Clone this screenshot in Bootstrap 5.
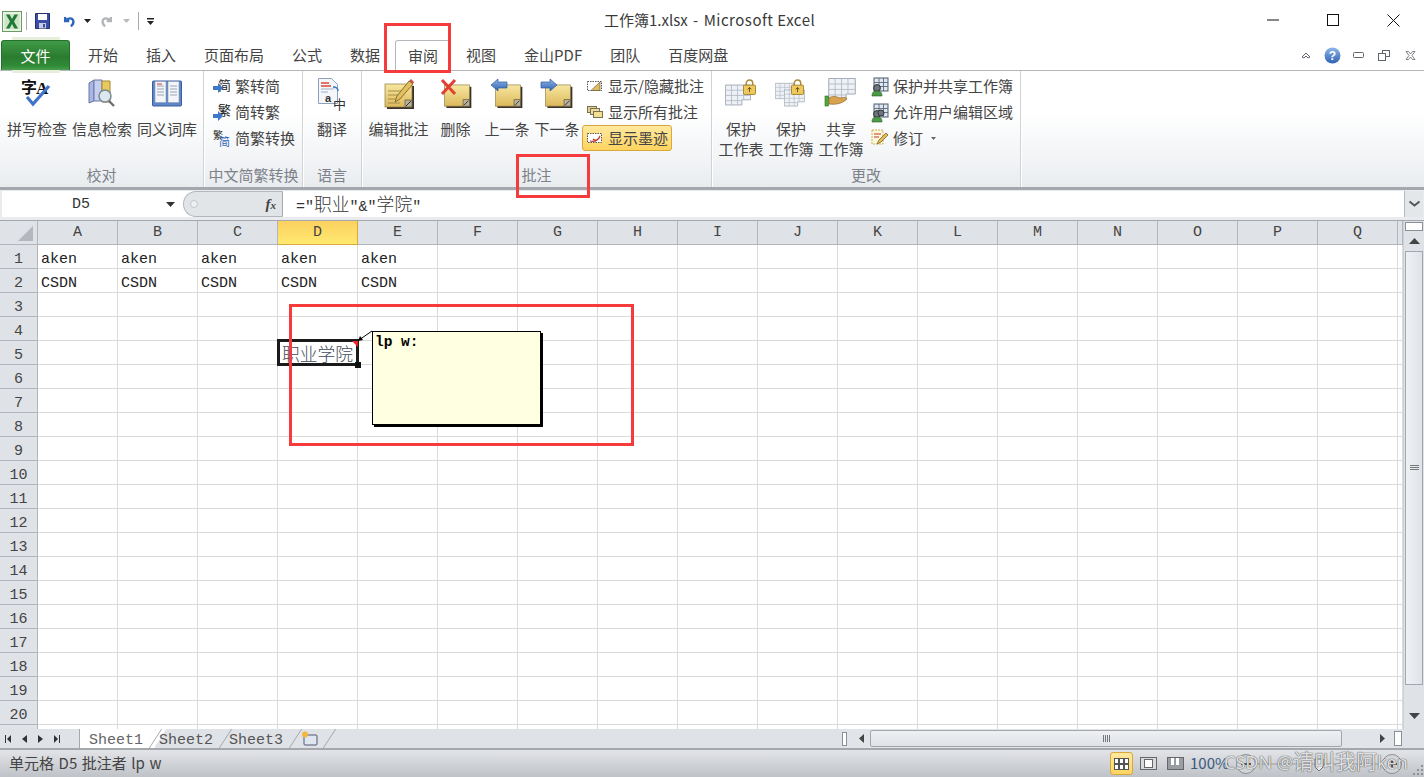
<!DOCTYPE html>
<html lang="zh-CN">
<head>
<meta charset="UTF-8"/>
<title>工作簿1.xlsx - Microsoft Excel</title>
<link href="https://cdn.jsdelivr.net/npm/bootstrap@5.3.0/dist/css/bootstrap.min.css" rel="stylesheet"/>
<style>
  html, body { margin: 0; width: 1424px; height: 777px; overflow: hidden; background: #fff; }
  body, .xl-app { font-family: "Noto Sans CJK SC", "Noto Sans", sans-serif; font-size: 15px; color: #444; }
  .xl-app { position: relative; width: 1424px; height: 777px; }
  svg { display: block; flex: none; overflow: visible; }
  .cjk { font-family: "Noto Sans CJK SC", sans-serif; font-size: 17.8px; font-weight: 300; }

  /* title bar */
  .xl-title { height: 40px; }
  .xl-qat { width: 160px; padding-left: 2px; padding-top: 2px; }
  .xl-qat .qsep { width: 1px; height: 18px; background: #a8acb2; }
  .xl-caption { left: 604px; top: 10px; color: #3a3a3a; font-size: 15px; line-height: 20px; white-space: pre; word-spacing: 2px; }
  .xl-caption span { letter-spacing: .5px; word-spacing: 0; }
  .xl-win { margin-left: auto; }
  .xl-win span { width: 60px; height: 30px; display: flex; align-items: center; justify-content: center; }

  /* tabs */
  .xl-tabs { height: 31px; border-bottom: 1px solid #b4b7bb; padding-left: 1px; }
  .xl-file { width: 69px; height: 30px; margin-right: 4px; text-align: center; line-height: 30px; color: #fff; position: relative;
    background: linear-gradient(#3f9a47, #2a7c2f 55%, #2f8a36 85%, #4a9f4e); border: 1px solid #27702c; border-bottom: 0; border-radius: 3px 3px 0 0; z-index: 1; }
  .xl-file::before, .xl-file::after { content: ""; position: absolute; left: 10px; right: 9px; height: 3px; background: #e6efdc; }
  .xl-file::before { top: -4px; }
  .xl-file::after { bottom: -3px; }
  .xl-tab { padding: 0 14px; height: 30px; line-height: 30px; color: #444; white-space: nowrap; }
  .xl-tab.on { height: 31px; padding: 0 12px; margin: 0 1px -1px; background: #fff; border: 1px solid #b4b7bb; border-bottom: 0; border-radius: 3px 3px 0 0; z-index: 1; }
  .xl-ctl { margin-left: auto; padding-right: 1px; height: 30px; }
  .xl-ctl span { width: 26px; display: flex; justify-content: center; }

  /* ribbon */
  .xl-ribbon { height: 116px; background: linear-gradient(#fff 35%, #f2f4f6 75%, #e9ecef); }
  .rb-group { border-right: 1px solid #cfd2d6; box-shadow: 1px 0 0 #fff; height: 116px; }
  .rb-body { height: 93px; flex: none; }
  .rb-name { height: 23px; line-height: 22px; text-align: center; color: #7d828a; font-size: 15px; white-space: nowrap; }
  .rb-big { display: flex; flex-direction: column; align-items: center; flex: none; line-height: 20px; white-space: nowrap; text-align: center; color: #444; }
  .rb-ico { height: 48px; display: flex; align-items: center; justify-content: center; padding-bottom: 4px; }
  .rb-small { display: flex; flex-direction: column; padding-top: 2px; }
  .rb-item { height: 26px; line-height: 26px; display: flex; align-items: center; white-space: nowrap; color: #444; }
  .rb-item.on { background: linear-gradient(#ffe9a0, #ffd45f); border: 1px solid #d8a83c; border-radius: 3px; }

  /* formula bar */
  .xl-fbar { height: 34px; border-top: 3px solid #a4a8ad; border-bottom: 1px solid #a4a8ad; background: #e9ebee; }
  .fb-row { height: 26px; margin: 1px 1px 0 2px; background: #fff; }
  .fb-name { width: 181px; padding-left: 70px; font-family: "Liberation Mono", monospace; color: #333; line-height: 28px; }
  .fb-pill { width: 100px; height: 26px; background: #e2e5e8; border: 1px solid #b4b8bd; border-right: 1px solid #a4a8ad; border-radius: 13px 0 0 13px; }
  .fb-fx { font-family: "Liberation Serif", serif; font-style: italic; font-weight: 700; font-size: 15px; color: #444; right: 6px; top: 1px; }
  .fb-text { padding-left: 13px; line-height: 25px; color: #333; flex: 1; font-family: "Liberation Mono", monospace; font-size: 15px; }
  .fb-drop { width: 19px; height: 26px; background: #e4e7ea; border-left: 1px solid #b4b8bd; }

  /* sheet */
  .xl-mid { height: 508px; }
  .xl-sheet { width: 1403px; height: 508px; overflow: hidden; display: grid; grid-template-columns: 38px repeat(17, 80px) 5px; grid-auto-rows: 24px;
    font-family: "Liberation Mono", "Noto Sans CJK SC", monospace; font-size: 15px; color: #222; }
  .sc { border-right: 1px solid #dadada; border-bottom: 1px solid #dadada; padding-left: 3px; line-height: 29px; white-space: nowrap; }
  .sh { background: #dfe2e7; border-right: 1px solid #b2b6bc; border-bottom: 1px solid #b2b6bc; text-align: center; line-height: 23px; color: #444; padding: 0; }
  .sh.rw { line-height: 29px; }
  .sh.hot { background: linear-gradient(#fbd15f, #ffe970); border-color: #dca83c; }
  .sel { position: relative; z-index: 2; overflow: visible; color: #3c4a58; padding-left: 4px; line-height: 25px; }
  .sel::before { content: ""; position: absolute; left: -1px; top: -2px; width: 82px; height: 27px; border: 3px solid #1b1b1b; }
  .sel::after { content: ""; position: absolute; left: 77px; top: 21px; width: 6px; height: 6px; background: #111; }
  .sel-mark { position: absolute; left: 74px; top: 0; z-index: 1; }
  .xl-comment { position: absolute; left: 372px; top: 110px; width: 169px; height: 94px; background: #ffffe1; border: 1px solid #000; box-shadow: 2px 2px 0 #000;
    font-family: "Liberation Mono", monospace; font-weight: 700; font-size: 14.5px; line-height: 16px; color: #000; padding: 2px; z-index: 3; }
  .xl-leader { position: absolute; left: 350px; top: 105px; z-index: 4; }

  /* vertical scrollbar */
  .xl-vbar { width: 21px; height: 508px; background: #dfe3e8; border-left: 1px solid #cdd1d6; }
  .vb-split { height: 9px; margin: 1px 1px 0; background: #fff; border: 1px solid #8b9097; }
  .vb-thumb { height: 434px; margin: 0 1px; background: linear-gradient(90deg, #eff1f4, #dfe3e8); border: 1px solid #a2a7ae; }
  .vb-arrow { height: 20px; }

  /* sheet tabs and horizontal bar */
  .xl-tabbar { height: 21px; background: #dfe2e7; border-bottom: 2px solid #a4a8ad; font-family: "Liberation Mono", monospace; color: #555; }
  .tb-nav { width: 80px; height: 19px; gap: 0; border-right: 1px solid #a4a8ad; padding-left: 5px; }
  .tb-sheet { width: 70px; height: 19px; line-height: 23px; padding-left: 4px; white-space: nowrap; position: relative; }
  .tb-sheet::after { content: ""; position: absolute; right: -1px; top: 0; width: 1px; height: 19px; background: #a4a8ad; transform: skewX(-33deg); }
  .tb-sheet.on { width: 75px; background: #fff; padding-left: 9px; color: #666; }
  .tb-sheet.on::before { content: ""; position: absolute; right: -5px; top: 0; width: 10px; height: 19px; background: #fff; transform: skewX(-33deg); z-index: 0; }
  .tb-new { width: 40px; padding-left: 6px; height: 19px; position: relative; }
  .tb-new::after { content: ""; position: absolute; right: 5px; top: 0; width: 1px; height: 19px; background: #a4a8ad; transform: skewX(-33deg); }
  .tb-rest { width: 507px; }
  .hb-main { flex: 1; height: 19px; background: #e1e4e9; }
  .hb-thumb { width: 472px; height: 17px; margin-left: 6px; background: linear-gradient(#eef0f3, #dfe2e7); border: 1px solid #a2a7ae; border-radius: 2px; }
  .hb-box { width: 8px; height: 15px; background: #fff; border: 1px solid #8b9097; }

  /* status bar */
  .xl-status { height: 27px; background: linear-gradient(#e2e4e8, #bfc2c7); padding-left: 9px; line-height: 25px; color: #444; font-size: 15px; word-spacing: 1.2px; }
  .st-view { width: 23px; height: 23px; display: flex; align-items: center; justify-content: center; }
  .st-view.on { background: linear-gradient(#ffe9a0, #ffd45f); border: 1px solid #d8a83c; border-radius: 3px; }
  .st-pct { left: 1190px; top: 0; color: #3a5a7c; position: absolute; font-size: 15px; }
  .xl-mark { position: absolute; left: 1224px; top: 748px; font-size: 18px; line-height: 26px; color: rgba(242,243,245,.9); z-index: 6; white-space: nowrap; text-shadow: 0 0 1px #555, 0 0 1px #555; font-family: "Noto Sans", "Noto Sans CJK SC", sans-serif; }
  .xl-mark span { font-size: 21px; }

  /* annotation boxes */
  .xl-red { position: absolute; border: 3px solid #f53b3b; z-index: 5; }
</style>
</head>
<body>
<svg width="0" height="0" class="position-absolute">
  <defs>
    <linearGradient id="gNote" x1="0" y1="0" x2="0" y2="1"><stop offset="0" stop-color="#f7e7a0"/><stop offset="1" stop-color="#dcb95c"/></linearGradient>
    <linearGradient id="gBlue" x1="0" y1="0" x2="0" y2="1"><stop offset="0" stop-color="#8fb6e8"/><stop offset="1" stop-color="#2f62b4"/></linearGradient>
    <symbol id="note" viewBox="0 0 30 26">
      <rect x="3" y="3" width="27" height="23" fill="#3a3228"/>
      <rect x="1" y="1" width="27" height="23" fill="url(#gNote)" stroke="#8d7a45" stroke-width=".7"/>
      <rect x="21" y="17" width="7" height="7" fill="#b9b19a" stroke="#5b5238" stroke-width=".7"/>
      <path d="M22 23l5-5" stroke="#333" stroke-width="1"/>
    </symbol>
    <symbol id="grid" viewBox="0 0 30 24">
      <path d="M.5.5h29v17h-10v6h-19z" fill="#eef1f6" stroke="#9aa3ae"/>
      <path d="M.5 6.5h29M.5 12.5h29M.5 18.5h19M7.5.5v23M14.5.5v23M21.5.5v17" stroke="#b3bcc8" fill="none"/>
    </symbol>
    <symbol id="lock" viewBox="0 0 14 17">
      <path d="M3.5 7V4.5a3.5 3.5 0 0 1 7 0V7" fill="none" stroke="#a98a3a" stroke-width="1.6"/>
      <rect x=".5" y="6.5" width="13" height="10" rx="1" fill="#eec95c" stroke="#a27f2c"/>
      <path d="M7 9v5M5 11l2-2 2 2" stroke="#6a4e14" fill="none"/>
    </symbol>
    <symbol id="people" viewBox="0 0 18 20">
      <rect x="3" y="1" width="14" height="13" fill="#dfe6ef" stroke="#4d5c70"/>
      <path d="M3 5.500h14M3 9.500h14M8 1v13M12.500 1v13" stroke="#4d5c70" stroke-width=".8"/>
      <circle cx="6" cy="11" r="3.400" fill="#6d7680" stroke="#333"/>
      <path d="M1 19c0-4 2-5 5-5s5 1 5 5z" fill="#4a9b45" stroke="#2a5d27" stroke-width=".6"/>
    </symbol>
  </defs>
</svg>

<div class="xl-app d-flex flex-column">

  <!-- title bar -->
  <div class="xl-title d-flex">
    <div class="xl-qat d-flex align-items-center position-relative">
      <svg width="20" height="21" viewBox="0 0 20 21"><rect x=".5" y=".5" width="19" height="20" fill="#e9f2e4" stroke="#6c9b62"/><rect x="2.500" y="3" width="15" height="15" fill="#cfe3c6"/><path d="M4 3.500h3.500L10 8l2.500-4.500H16L12 10.500l4 7h-3.600L10 13l-2.500 4.500H4l4-7z" fill="#1f7a37"/></svg>
      <span class="qsep ms-1"></span>
      <svg class="ms-2" width="15" height="16" viewBox="0 0 15 16"><path d="M.5.5h14v15H.5z" fill="#3c4fa8" stroke="#222f70"/><rect x="3" y="1" width="9" height="6" fill="#fff"/><rect x="4" y="10" width="7" height="5.500" fill="#c9cede"/><rect x="8" y="11" width="2" height="3.500" fill="#3c4fa8"/></svg>
      <svg style="margin-left:11px" width="14" height="14" viewBox="0 0 17 14"><path d="M5 2v5h5M5.500 6.500C9 2.500 14 3 15 7c.5 2.500-1 5-3 6.500" fill="none" stroke="#2c66bd" stroke-width="2.800"/></svg>
      <svg style="margin-left:9px" width="7" height="4" viewBox="0 0 7 4"><path d="M0 0h7L3.500 4z" fill="#222"/></svg>
      <svg style="margin-left:10px" width="14" height="14" viewBox="0 0 17 14"><path d="M12 2v5H7M11.500 6.500C8 2.500 3 3 2 7c-.5 2.500 1 5 3 6.500" fill="none" stroke="#b3b5b8" stroke-width="2.800"/></svg>
      <svg class="ms-2" width="7" height="4" viewBox="0 0 7 4"><path d="M0 0h7L3.500 4z" fill="#b8babd"/></svg>
      <span class="qsep ms-2"></span>
      <svg class="ms-2" width="7" height="7" viewBox="0 0 7 7"><path d="M0 0h7v1.500H0zM0 3h7L3.500 7z" fill="#222"/></svg>
    </div>
    <div class="xl-caption position-absolute">工作簿1.xlsx - <span>Microsoft Excel</span></div>
    <div class="xl-win d-flex align-items-center" style="padding-right:1px">
      <span><svg width="12" height="2" viewBox="0 0 12 2"><path d="M0 1h12" stroke="#111"/></svg></span>
      <span><svg width="12" height="12" viewBox="0 0 12 12"><rect x=".5" y=".5" width="11" height="11" fill="none" stroke="#111"/></svg></span>
      <span><svg width="13" height="13" viewBox="0 0 13 13"><path d="M.5.500l12 12M12.500.500l-12 12" stroke="#111"/></svg></span>
    </div>
  </div>

  <!-- ribbon tabs -->
  <div class="xl-tabs d-flex align-items-start">
    <div class="xl-file">文件</div>
    <div class="xl-tab">开始</div>
    <div class="xl-tab">插入</div>
    <div class="xl-tab">页面布局</div>
    <div class="xl-tab">公式</div>
    <div class="xl-tab">数据</div>
    <div class="xl-tab on">审阅</div>
    <div class="xl-tab">视图</div>
    <div class="xl-tab">金山PDF</div>
    <div class="xl-tab">团队</div>
    <div class="xl-tab">百度网盘</div>
    <div class="xl-ctl d-flex align-items-center">
      <span><svg width="10" height="8" viewBox="0 0 10 8"><path d="M1 6l4-4 4 4-2 1-2-2-2 2z" fill="#fff" stroke="#5f6670"/></svg></span>
      <span><svg width="17" height="17" viewBox="0 0 17 17"><circle cx="8.500" cy="8.500" r="8" fill="url(#gBlue)"/><text x="8.500" y="13" text-anchor="middle" font-family="Liberation Sans" font-weight="700" font-size="12" fill="#fff">?</text></svg></span>
      <span><svg width="11" height="6" viewBox="0 0 11 6"><rect x=".5" y=".5" width="10" height="5" rx="1" fill="#fff" stroke="#5f6670"/></svg></span>
      <span><svg width="12" height="11" viewBox="0 0 12 11"><rect x="4.500" y=".5" width="7" height="6" fill="#fff" stroke="#5f6670"/><rect x=".5" y="3.500" width="7" height="7" fill="#fff" stroke="#5f6670"/></svg></span>
      <span><svg width="11" height="9" viewBox="0 0 11 9"><path d="M1 .5h2.500L5.500 3l2-2.500H10L7 4.500 10 8.500H7.500l-2-2.500-2 2.500H1l3-4z" fill="#fff" stroke="#5f6670" stroke-width=".8"/></svg></span>
    </div>
  </div>

  <!-- ribbon -->
  <div class="xl-ribbon d-flex">

    <div class="rb-group d-flex flex-column" style="width:204px">
      <div class="rb-body d-flex" style="padding-left:7px;gap:5px">
        <div class="rb-big" style="width:60px"><div class="rb-ico">
          <svg width="34" height="32" viewBox="0 0 34 32"><text x="1" y="16" font-family="Noto Sans CJK SC" font-weight="700" font-size="16" fill="#111">字</text><text x="16" y="17" font-family="Liberation Serif" font-weight="700" font-size="17" fill="#111">A</text><path d="M7 20l6 7L29 9" fill="none" stroke="#3f74c8" stroke-width="3.200"/></svg>
        </div>拼写检查</div>
        <div class="rb-big" style="width:60px"><div class="rb-ico">
          <svg width="30" height="32" viewBox="0 0 30 32"><path d="M2 6l5-3v21l-5 2z" fill="#a8b6e2" stroke="#6b78a8"/><path d="M7 3h8v21H7z" fill="#c6cfee" stroke="#6b78a8"/><path d="M15 4h8v21h-8z" fill="#ecc95c" stroke="#a58a35"/><circle cx="18" cy="19" r="6" fill="#dbe8ee" stroke="#7b8a92" stroke-width="1.500"/><path d="M22 24l5 5" stroke="#6a6f75" stroke-width="2.400"/></svg>
        </div>信息检索</div>
        <div class="rb-big" style="width:60px"><div class="rb-ico">
          <svg width="30" height="28" viewBox="0 0 30 28"><rect x=".5" y="2" width="29" height="25" rx="1" fill="#5e85c5" stroke="#3b5e9c"/><path d="M3 2.500h11v21H3zM16 2.500h11v21H16z" fill="#f3f5f8" stroke="#8b9cb8" stroke-width=".6"/><path d="M5 7h7M5 10h7M5 13h7M5 16h7M18 7h7M18 10h7M18 13h7M18 16h7" stroke="#9ba6b6"/><path d="M5 5h5" stroke="#c03a3a"/></svg>
        </div>同义词库</div>
      </div>
      <div class="rb-name">校对</div>
    </div>

    <div class="rb-group d-flex flex-column" style="width:99px">
      <div class="rb-body rb-small" style="padding-left:9px">
        <div class="rb-item"><svg class="me-1" width="18" height="18" viewBox="0 0 18 18"><text x="5" y="13" font-family="Noto Sans CJK SC" font-size="13" fill="#222">简</text><path d="M0 9h5V6l5 5-5 5v-3H0z" fill="#3e78c9"/></svg>繁转简</div>
        <div class="rb-item"><svg class="me-1" width="18" height="18" viewBox="0 0 18 18"><text x="5" y="12" font-family="Noto Sans CJK SC" font-size="13" fill="#222">繁</text><path d="M0 11h5V8l5 5-5 5v-3H0z" fill="#3e78c9"/></svg>简转繁</div>
        <div class="rb-item"><svg class="me-1" width="18" height="18" viewBox="0 0 18 18"><text x="0" y="10" font-family="Noto Sans CJK SC" font-size="10" fill="#222">繁</text><text x="6" y="17" font-family="Noto Sans CJK SC" font-size="11" fill="#2f62b4">简</text></svg>简繁转换</div>
      </div>
      <div class="rb-name" style="padding-left:1px">中文简繁转换</div>
    </div>

    <div class="rb-group d-flex flex-column" style="width:59px">
      <div class="rb-body d-flex justify-content-center">
        <div class="rb-big"><div class="rb-ico">
          <svg width="30" height="32" viewBox="0 0 30 32"><path d="M1.500 1.500h13l6 6v19h-19z" fill="#f4f6fa" stroke="#8da0bd"/><path d="M4 6h8M4 9h10" stroke="#d6483a" stroke-width="1.400"/><path d="M4 12h13M4 15h7" stroke="#9fb1cc"/><text x="8" y="25" font-family="Liberation Sans" font-weight="700" font-size="11" fill="#333">a</text><text x="16" y="32" font-family="Noto Sans CJK SC" font-size="13" fill="#333">中</text><path d="M16 10c3 0 5 1 5 4" fill="none" stroke="#3e78c9" stroke-width="1.500"/></svg>
        </div>翻译</div>
      </div>
      <div class="rb-name">语言</div>
    </div>

    <div class="rb-group d-flex flex-column" style="width:350px">
      <div class="rb-body d-flex" style="padding-left:6px">
        <div class="rb-big" style="width:61px"><div class="rb-ico">
          <svg width="32" height="32" viewBox="0 0 32 32"><use href="#note" x="1" y="6" width="30" height="26"/><path d="M5 14h13M5 18h11M5 22h9M5 26h12" stroke="#a58d4a"/><path d="M12 25l2-6L26 4l4 3-13 15z" fill="#e2c060" stroke="#8a6f2a"/><path d="M26 4l2-2 3 3-1 2z" fill="#c9504a"/></svg>
        </div>编辑批注</div>
        <div class="rb-big" style="width:53px"><div class="rb-ico">
          <svg width="32" height="30" viewBox="0 0 32 30"><use href="#note" x="3" y="6" width="29" height="24"/><path d="M2 2l13 14M15 2L2 16" stroke="#e23f32" stroke-width="3"/></svg>
        </div>删除</div>
        <div class="rb-big" style="width:50px"><div class="rb-ico">
          <svg width="32" height="30" viewBox="0 0 32 30"><use href="#note" x="3" y="6" width="29" height="24"/><path d="M0 7l7-6v3h9v6H7v3z" fill="url(#gBlue)" stroke="#2f5a9c" stroke-width=".7"/></svg>
        </div>上一条</div>
        <div class="rb-big" style="width:50px"><div class="rb-ico">
          <svg width="32" height="30" viewBox="0 0 32 30"><use href="#note" x="3" y="6" width="29" height="24"/><path d="M16 7L9 1v3H0v6h9v3z" fill="url(#gBlue)" stroke="#2f5a9c" stroke-width=".7"/></svg>
        </div>下一条</div>
        <div class="rb-small">
          <div class="rb-item" style="padding-left:5px"><svg class="me-2" width="15" height="12" viewBox="0 0 15 12"><rect x=".5" y="1.500" width="14" height="9" fill="#fff" stroke="#555" stroke-dasharray="1.500 1"/><path d="M4 10.500L13 2v8.500z" fill="#dcbc5e" stroke="#5a4e2a" stroke-width=".6"/></svg><span style="margin-left:-2px">显示/隐藏批注</span></div>
          <div class="rb-item" style="padding-left:5px"><svg class="me-2" width="16" height="12" viewBox="0 0 16 12"><rect x=".5" y=".5" width="9" height="6" fill="#e2d29a" stroke="#77704f"/><rect x="3.500" y="2.500" width="9" height="6" fill="#eedd9e" stroke="#77704f"/><rect x="6.500" y="5.500" width="9" height="6" fill="#f3df92" stroke="#77704f"/></svg><span style="margin-left:-3px">显示所有批注</span></div>
          <div class="rb-item on" style="width:90px;padding-left:4px"><svg class="me-2" width="15" height="12" viewBox="0 0 15 12"><rect x=".5" y="1.500" width="14" height="9" fill="#fff" stroke="#555" stroke-dasharray="1.500 1"/><path d="M3 9c4 1 8 0 10-5-1 4-5 5-7 3" fill="#fff" stroke="#c0392b" stroke-width="1.200"/></svg><span style="margin-left:-2px">显示墨迹</span></div>
        </div>
      </div>
      <div class="rb-name">批注</div>
    </div>

    <div class="rb-group d-flex flex-column" style="width:309px">
      <div class="rb-body d-flex" style="padding-left:4px">
        <div class="rb-big" style="width:50px"><div class="rb-ico position-relative">
          <svg width="32" height="28" viewBox="0 0 32 28"><use href="#grid" x="0" y="5" width="26" height="22"/><use href="#lock" x="18" y="0" width="13" height="16"/></svg>
        </div>保护<br>工作表</div>
        <div class="rb-big" style="width:50px"><div class="rb-ico">
          <svg width="32" height="28" viewBox="0 0 32 28"><use href="#grid" x="0" y="3" width="20" height="18"/><use href="#grid" x="9" y="10" width="21" height="18"/><use href="#lock" x="16" y="0" width="13" height="16"/></svg>
        </div>保护<br>工作簿</div>
        <div class="rb-big" style="width:50px"><div class="rb-ico">
          <svg width="32" height="30" viewBox="0 0 32 30"><use href="#grid" x="2" y="0" width="30" height="22"/><rect x="0" y="18" width="3.500" height="10" fill="#4caa3c" stroke="#2a6d22" stroke-width=".6"/><path d="M4 20c5-3 8-1 11 0 5-1 8-1 6 2-4 3-9 5-17 4z" fill="#d8a24e" stroke="#8e6a2c" stroke-width=".7"/></svg>
        </div>共享<br>工作簿</div>
        <div class="rb-small" style="padding-left:5px">
          <div class="rb-item"><svg class="me-1" width="18" height="18" viewBox="0 0 18 18"><use href="#people" width="18" height="20"/></svg>保护并共享工作簿</div>
          <div class="rb-item"><svg class="me-1" width="18" height="18" viewBox="0 0 18 18"><use href="#people" width="18" height="20"/><circle cx="10" cy="10" r="3" fill="#6d7680" stroke="#333"/></svg>允许用户编辑区域</div>
          <div class="rb-item"><svg class="me-1" width="18" height="18" viewBox="0 0 18 18"><path d="M1 1h11v14H1z" fill="#fdf6d8" stroke="#c8b25e" stroke-dasharray="2 1"/><path d="M3 5h7M3 8h5" stroke="#c0392b"/><path d="M6 15l2-4 7-7 2 2-7 7z" fill="#e3bd55" stroke="#7c6426" stroke-width=".8"/></svg>修订<svg class="ms-2" width="5" height="3" viewBox="0 0 5 3"><path d="M0 0h5L2.500 3z" fill="#666"/></svg></div>
        </div>
      </div>
      <div class="rb-name">更改</div>
    </div>
  </div>

  <!-- formula bar -->
  <div class="xl-fbar">
    <div class="fb-row d-flex">
      <div class="fb-name d-flex justify-content-between pe-2">D5<svg class="align-self-center" width="9" height="5" viewBox="0 0 9 5"><path d="M0 0h9L4.500 5z" fill="#333"/></svg></div>
      <div class="fb-pill position-relative">
        <svg class="position-absolute" style="left:6px;top:8px" width="8" height="8" viewBox="0 0 8 8"><circle cx="4" cy="4" r="3.500" fill="#eef0f2" stroke="#c3c7cc"/></svg>
        <span class="fb-fx position-absolute">f<small style="font-size:11px">x</small></span>
      </div>
      <div class="fb-text">="<span class="cjk">职业</span>"&amp;"<span class="cjk">学院</span>"</div>
      <div class="fb-drop d-flex align-items-center justify-content-center"><svg width="11" height="6" viewBox="0 0 11 6"><path d="M.5.500l5 4 5-4" fill="none" stroke="#555" stroke-width="2"/></svg></div>
    </div>
  </div>

  <!-- sheet area -->
  <div class="xl-mid d-flex position-relative">
    <div class="xl-sheet" id="sheet"></div>
    <svg class="xl-leader" width="24" height="24" viewBox="0 0 24 24"><path d="M22 5L9 14" stroke="#000" fill="none"/><path d="M8 15l2-5 3 4z" fill="#000"/></svg>
    <div class="xl-comment">lp w:</div>
    <div class="xl-vbar d-flex flex-column">
      <div class="vb-split"></div>
      <div class="vb-arrow d-flex align-items-center justify-content-center"><svg width="11" height="6" viewBox="0 0 11 6"><path d="M5.500 0L11 6H0z" fill="#444"/></svg></div>
      <div class="vb-thumb d-flex align-items-center justify-content-center"><svg width="9" height="6" viewBox="0 0 9 6"><path d="M0 .5h9M0 2.500h9M0 4.500h9" stroke="#777"/></svg></div>
      <div class="d-flex align-items-center justify-content-center flex-grow-1" style="padding-top:18px"><svg width="11" height="6" viewBox="0 0 11 6"><path d="M0 0h11L5.500 6z" fill="#444"/></svg></div>
    </div>
  </div>

  <!-- sheet tabs + horizontal scrollbar -->
  <div class="xl-tabbar d-flex">
    <div class="tb-nav d-flex align-items-center" style="gap:11px">
      <svg width="6" height="8" viewBox="0 0 6 8"><path d="M0 0h1v8H0zM6 0v8L2 4z" fill="#333"/></svg>
      <svg width="5" height="8" viewBox="0 0 5 8"><path d="M5 0v8L0 4z" fill="#333"/></svg>
      <svg width="5" height="8" viewBox="0 0 5 8"><path d="M0 0v8l5-4z" fill="#333"/></svg>
      <svg width="6" height="8" viewBox="0 0 6 8"><path d="M5 0h1v8H5zM0 0v8l4-4z" fill="#333"/></svg>
    </div>
    <div class="tb-sheet on">Sheet1</div>
    <div class="tb-sheet">Sheet2</div>
    <div class="tb-sheet">Sheet3</div>
    <div class="tb-new d-flex align-items-center"><svg width="17" height="15" viewBox="0 0 17 15"><rect x="3" y="4" width="13" height="10" rx="1" fill="#dfe6f0" stroke="#557"/><circle cx="4" cy="3.500" r="3" fill="#f1b93a"/></svg></div>
    <div class="tb-rest"></div>
    <div class="d-flex align-items-center" style="width:5px;height:19px"><div class="hb-box" style="width:6px;height:14px"></div></div>
    <div class="hb-main d-flex align-items-center">
      <svg style="margin-left:12px" width="5" height="9" viewBox="0 0 5 9"><path d="M5 0v9L0 4.500z" fill="#444"/></svg>
      <div class="hb-thumb d-flex align-items-center justify-content-center"><svg width="7" height="7" viewBox="0 0 7 7"><path d="M.5 0v7M2.500 0v7M4.500 0v7M6.500 0v7" stroke="#777"/></svg></div>
      <svg style="margin-left:38px" width="5" height="9" viewBox="0 0 5 9"><path d="M0 0v9l5-4.500z" fill="#444"/></svg>
    </div>
    <div class="d-flex align-items-center" style="width:30px;height:19px"><div class="hb-box"></div></div>
  </div>

  <!-- status bar -->
  <div class="xl-status d-flex position-relative">
    <span>单元格 D5 批注者 lp w</span>
    <div class="d-flex align-items-center gap-1 position-absolute" style="left:1110px;top:2px">
      <div class="st-view on"><svg width="15" height="12" viewBox="0 0 15 12"><rect width="15" height="12" fill="#555"/><path d="M1 1h3v4H1zM6 1h3v4H6zM11 1h3v4h-3zM1 7h3v4H1zM6 7h3v4H6zM11 7h3v4h-3z" fill="#fff"/></svg></div>
      <div class="st-view"><svg width="17" height="13" viewBox="0 0 17 13"><rect x=".5" y=".5" width="16" height="12" fill="#d8dadd" stroke="#666"/><rect x="4.500" y="2.500" width="8" height="8" fill="#fff" stroke="#666"/></svg></div>
      <div class="st-view"><svg width="17" height="13" viewBox="0 0 17 13"><rect x=".5" y=".5" width="16" height="12" fill="#9a9da1" stroke="#666"/><path d="M4 1h3v7H4zM9 1h3v7H9z" fill="#fff"/></svg></div>
    </div>
    <span class="st-pct">100%</span>
    <svg class="position-absolute" style="left:1235px;top:2px" width="168" height="24" viewBox="0 0 168 24"><circle cx="11" cy="12" r="9.500" fill="#d3d5d9" stroke="#8b8e93"/><path d="M6 12h10" stroke="#555" stroke-width="2"/><path d="M21 12h135" stroke="#9a9da1"/><path d="M80 7h8v8l-4 4-4-4z" fill="#e7e9ec" stroke="#777"/><circle cx="157" cy="12" r="9.500" fill="#d3d5d9" stroke="#8b8e93"/><path d="M152 12h10M157 7v10" stroke="#555" stroke-width="2"/></svg>
    <svg class="position-absolute" style="left:1412px;top:14px" width="11" height="11" viewBox="0 0 11 11"><path d="M9 1h2v2H9zM5 5h2v2H5zM9 5h2v2H9zM1 9h2v2H1zM5 9h2v2H5zM9 9h2v2H9z" fill="#8e9196"/></svg>
  </div>

  <!-- red annotation frames drawn on the screenshot -->
  <div class="xl-red" style="left:384px;top:23px;width:67px;height:50px"></div>
  <div class="xl-red" style="left:516px;top:154px;width:74px;height:44px"></div>
  <div class="xl-red" style="left:289px;top:304px;width:345px;height:142px"></div>
  <div class="xl-mark">CSDN @<span>请叫我阿</span>ken</div>
</div>

<script>
  // grid cells: header row + 21 rows, A..Q plus the cut-off column on the right
  var letters = "ABCDEFGHIJKLMNOPQ".split("");
  var cells = '<div class="sc sh position-relative"><svg class="position-absolute" style="left:18px;top:5px" width="15" height="15" viewBox="0 0 15 15"><path d="M15 0v15H0z" fill="#b4b8be"/></svg></div>';
  letters.forEach(function (l) {
    cells += '<div class="sc sh' + (l === "D" ? " hot" : "") + '">' + l + "</div>";
  });
  cells += '<div class="sc sh"></div>';
  for (var r = 1; r <= 21; r++) {
    cells += '<div class="sc sh rw">' + r + "</div>";
    for (var c = 0; c < 18; c++) {
      var txt = "", cls = "sc";
      if (c < 5 && r === 1) txt = "aken";
      if (c < 5 && r === 2) txt = "CSDN";
      if (c === 3 && r === 5) {
        txt = '<span class="cjk">职业学院</span><svg class="sel-mark" width="6" height="6" viewBox="0 0 6 6"><path d="M0 0h6v6z" fill="#e8262a"/></svg>';
        cls += " sel";
      }
      cells += '<div class="' + cls + '">' + txt + "</div>";
    }
  }
  document.getElementById("sheet").innerHTML = cells;
</script>
<script src="https://cdn.jsdelivr.net/npm/bootstrap@5.3.0/dist/js/bootstrap.bundle.min.js"></script>
</body>
</html>
